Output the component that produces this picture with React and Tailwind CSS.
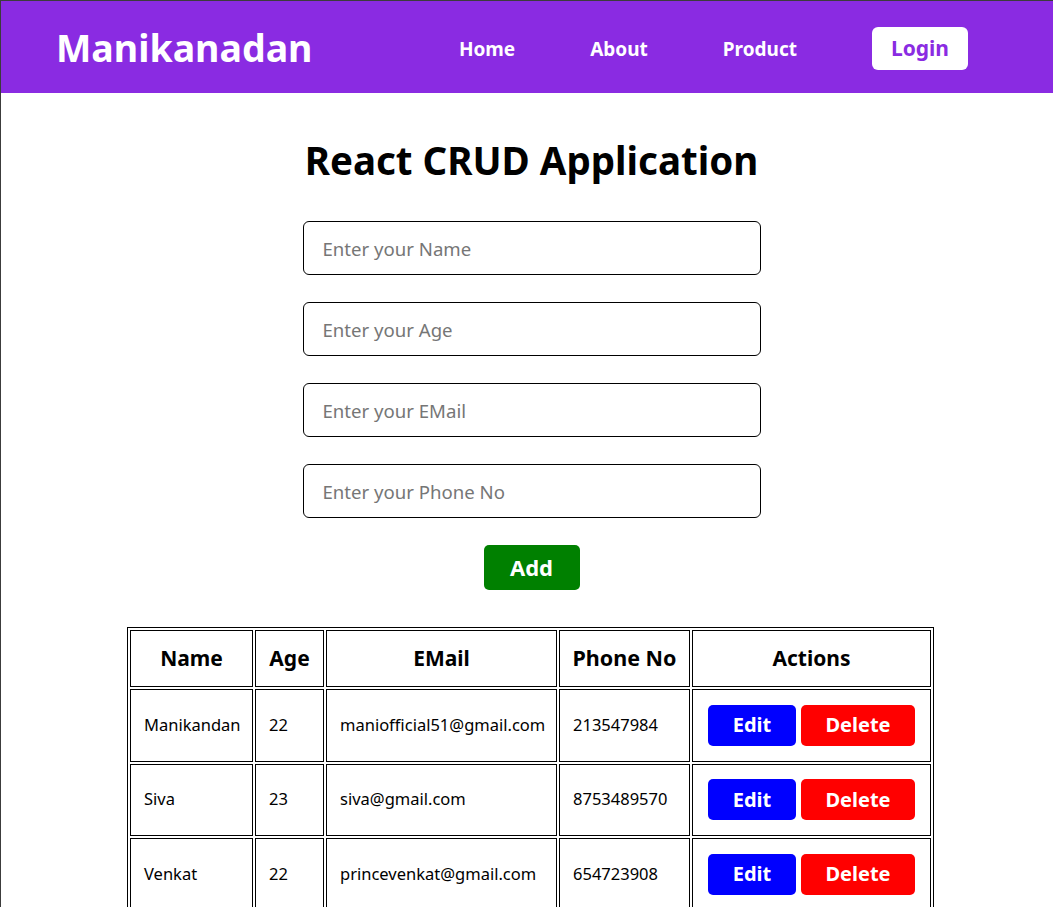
import React, { useState } from 'react';

const initialUsers = [
    { name: 'Manikandan', age: '22', email: 'maniofficial51@gmail.com', phone: '213547984' },
    { name: 'Siva', age: '23', email: 'siva@gmail.com', phone: '8753489570' },
    { name: 'Venkat', age: '22', email: 'princevenkat@gmail.com', phone: '654723908' },
];

export default function App() {
    const [users] = useState(initialUsers);

    return (
        <div className="min-h-screen bg-white border-t border-l border-[#3c3c3c] text-black" style={{ fontFamily: '"Noto Sans", "Open Sans", sans-serif' }}>
            {/* Navbar */}
            <nav className="h-[92px] bg-[#8a2be2] flex items-center justify-between pl-[55px] pr-[85px] pt-[3px]">
                <h1 className="text-[37.5px] font-bold text-white">Manikanadan</h1>
                <ul className="flex items-center gap-[75px]">
                    <li className="text-[19px] font-bold text-white mt-[1px]">Home</li>
                    <li className="text-[19px] font-bold text-white mt-[1px]">About</li>
                    <li className="text-[19px] font-bold text-white mt-[1px]">Product</li>
                    <li>
                        <button className="w-[96px] h-[43px] bg-white rounded-[6px] text-[21px] font-bold text-[#8a2be2]">Login</button>
                    </li>
                </ul>
            </nav>

            {/* Form */}
            <div className="flex flex-col items-center pl-[9px] pt-[40px]">
                <h2 className="text-[38.5px] font-bold leading-[54px]">React CRUD Application</h2>
                <div className="flex flex-col gap-[27px] mt-[34px]">
                    {['Enter your Name', 'Enter your Age', 'Enter your EMail', 'Enter your Phone No'].map((p) => (
                        <input
                            key={p}
                            placeholder={p}
                            className="w-[458px] h-[54px] border border-black rounded-[6px] px-[19px] text-[18.6px] placeholder:text-[#767676] outline-none"
                        />
                    ))}
                </div>
                <button className="mt-[27px] w-[96px] h-[45px] bg-[#008000] rounded-[5px] text-white text-[22px] font-bold">Add</button>

                {/* Table */}
                <table className="mt-[37px] mr-[2px] border border-black border-separate border-spacing-[2px]">
                    <thead>
                        <tr className="h-[57px]">
                            <th className="w-[123px] border border-black text-[21px] font-bold">Name</th>
                            <th className="w-[69px] border border-black text-[21px] font-bold">Age</th>
                            <th className="w-[231px] border border-black text-[21px] font-bold">EMail</th>
                            <th className="w-[131px] border border-black text-[21.5px] font-bold">Phone No</th>
                            <th className="w-[239px] border border-black text-[21px] font-bold">Actions</th>
                        </tr>
                    </thead>
                    <tbody>
                        {users.map((u) => (
                            <tr key={u.email} className="h-[72.5px]">
                                <td className="border border-black pl-[13px] text-[16.5px]">{u.name}</td>
                                <td className="border border-black pl-[13px] text-[16.5px]">{u.age}</td>
                                <td className="border border-black pl-[13px] text-[16.5px]">{u.email}</td>
                                <td className="border border-black pl-[13px] text-[16.5px]">{u.phone}</td>
                                <td className="border border-black pl-[15px]">
                                    <div className="flex gap-[5px]">
                                        <button className="w-[88px] h-[41px] bg-[#0000ff] rounded-[5px] text-white text-[20px] font-bold">Edit</button>
                                        <button className="w-[114px] h-[41px] bg-[#ff0000] rounded-[5px] text-white text-[20px] font-bold">Delete</button>
                                    </div>
                                </td>
                            </tr>
                        ))}
                    </tbody>
                </table>
            </div>
        </div>
    );
}
